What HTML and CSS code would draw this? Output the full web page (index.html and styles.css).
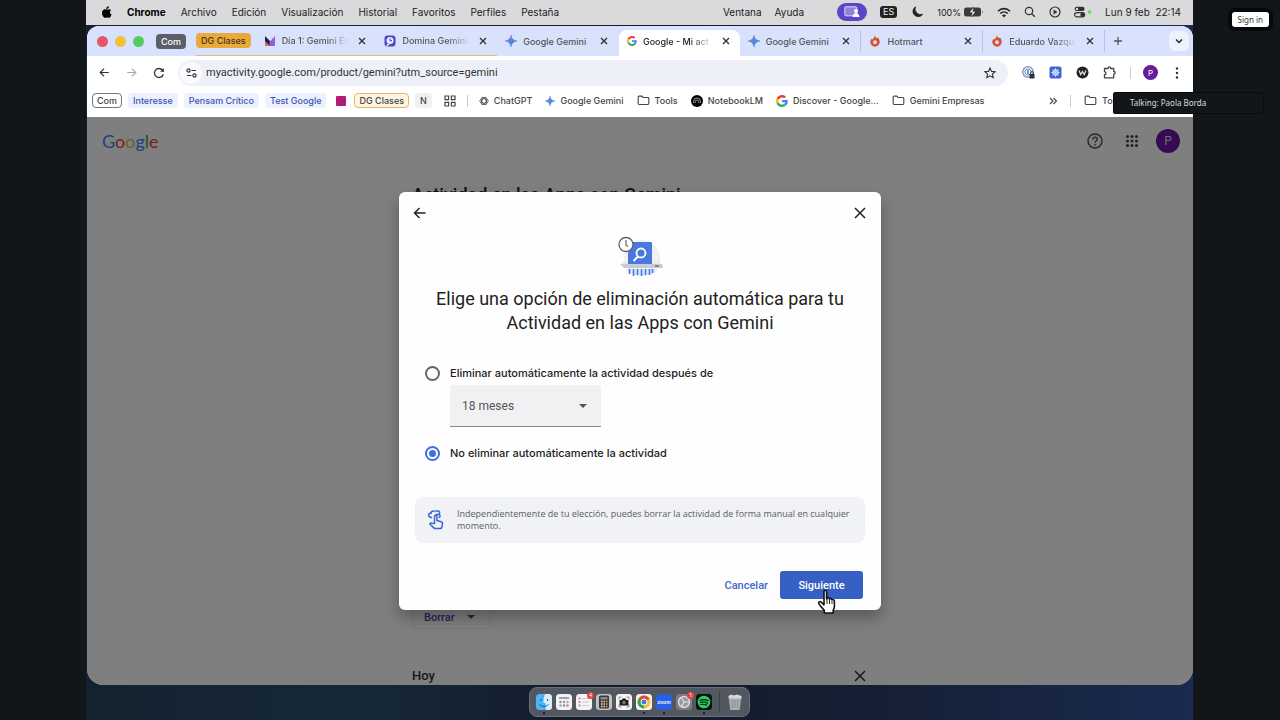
FILE: index.html
```html
<!DOCTYPE html>
<html lang="es">

<head>
  <meta charset="UTF-8">
  <meta name="viewport" content="width=device-width, initial-scale=1.0">
  <title>Google - Mi actividad</title>
  <link rel="stylesheet" href="styles.css">
</head>

<body>
  <!-- shared icons -->
  <svg class="sprite" aria-hidden="true">
    <defs>
      <linearGradient id="gem-fill" x1="0" y1="0" x2="1" y2="1">
        <stop offset="0.1" stop-color="#e0574a"/>
        <stop offset="0.4" stop-color="#5b86e8"/>
        <stop offset="0.65" stop-color="#4a86e8"/>
        <stop offset="1" stop-color="#3fae5f"/>
      </linearGradient>
      <symbol id="x" viewBox="0 0 10 10"><path d="M2 2l6 6M8 2l-6 6" stroke="currentColor" stroke-width="1.4" fill="none"/></symbol>
      <symbol id="x-big" viewBox="0 0 16 16"><path d="M3 3l10 10M13 3L3 13" stroke="currentColor" stroke-width="1.5" fill="none"/></symbol>
      <symbol id="gem" viewBox="0 0 24 24"><path d="M12 0c1 7 5 11 12 12-7 1-11 5-12 12-1-7-5-11-12-12 7-1 11-5 12-12z" fill="url(#gem-fill)" stroke="url(#gem-fill)" stroke-width="1"/></symbol>
      <symbol id="g" viewBox="0 0 48 48">
        <path fill="#EA4335" d="M24 9.5c3.54 0 6.71 1.22 9.21 3.6l6.85-6.85C35.9 2.38 30.47 0 24 0 14.62 0 6.51 5.38 2.56 13.22l7.98 6.19C12.43 13.72 17.74 9.5 24 9.5z"/>
        <path fill="#4285F4" d="M46.98 24.55c0-1.57-.15-3.09-.38-4.55H24v9.02h12.94c-.58 2.96-2.26 5.48-4.78 7.18l7.73 6c4.51-4.18 7.09-10.36 7.09-17.65z"/>
        <path fill="#FBBC05" d="M10.53 28.59c-.48-1.45-.76-2.99-.76-4.59s.27-3.14.76-4.59l-7.98-6.19C.92 16.46 0 20.12 0 24s.92 7.54 2.56 10.78l7.97-6.19z"/>
        <path fill="#34A853" d="M24 48c6.48 0 11.93-2.13 15.89-5.81l-7.73-6c-2.15 1.45-4.92 2.3-8.16 2.3-6.26 0-11.57-4.22-13.47-9.91l-7.98 6.19C6.51 42.62 14.62 48 24 48z"/>
      </symbol>
      <symbol id="flame" viewBox="0 0 12 14"><path d="M6 0c0 2 1.400 3 2 3.800C8.800 3.600 9 3 9 2.600 10.800 4.200 11.500 6.200 11.500 8.200A5.500 5.500 0 1 1 .5 8.200C.5 6.500 1.300 5.300 2.200 4.400 2.500 5 3 5.200 3.500 5 4 3.500 5.800 2.500 6 0zM6 6.200a2.300 2.300 0 1 0 0 4.600 2.300 2.300 0 0 0 0-4.600z" fill="#d9502f" fill-rule="evenodd"/></symbol>
      <symbol id="folder" viewBox="0 0 14 12"><path d="M1.200 2.200c0-.6.4-1 1-1h3l1.400 1.500h5.200c.6 0 1 .4 1 1v5.600c0 .6-.4 1-1 1H2.200c-.6 0-1-.4-1-1z" fill="none" stroke="currentColor" stroke-width="1.200"/></symbol>
      <symbol id="arrow" viewBox="0 0 14 14"><path d="M12.500 7h-11M6.500 2l-5 5 5 5" fill="none" stroke="currentColor" stroke-width="1.500"/></symbol>
    </defs>
  </svg>

  <div class="screen">
    <nav class="menubar">
      <svg class="apple" viewBox="0 0 24 28"><path d="M16.500 0c.2 2-.6 3.800-1.700 5-1.100 1.300-2.800 2.200-4.500 2.100-.2-1.900.7-3.800 1.700-5C13.100.9 15 .1 16.500 0zM22 9.500c-1.700 1-2.900 2.700-2.900 5 0 2.700 1.600 4.700 3.900 5.600-.5 1.500-1.300 3-2.200 4.400-1.300 1.900-2.500 3.500-4.500 3.500-1.900 0-2.500-1.100-4.700-1.100S8.700 28 7 28c-2 .1-3.500-1.900-4.700-3.700C-.2 20.500-1 14.800 1.300 11.200 2.700 8.900 5 7.500 7.300 7.500c2.100 0 3.400 1.200 5 1.200 1.700 0 2.700-1.200 5.100-1.200 1.800 0 3.500.8 4.600 2z"/></svg>
      <b>Chrome</b>
      <span>Archivo</span>
      <span>Edición</span>
      <span>Visualización</span>
      <span>Historial</span>
      <span>Favoritos</span>
      <span>Perfiles</span>
      <span>Pestaña</span>
      <div class="menu-right">
        <span>Ventana</span>
        <span class="ayuda">Ayuda</span>
        <span class="share-pill"><svg width="16" height="12" viewBox="0 0 16 12"><rect x=".8" y=".8" width="12" height="9" rx="1" fill="#8f83e0" stroke="#dcd8fa"/><circle cx="12" cy="5" r="2" fill="#fff"/><path d="M8.500 11c0-5 7-5 7 0z" fill="#fff"/></svg></span>
        <span class="lang">ES</span>
        <svg class="moon" width="14" height="12" viewBox="0 0 14 12"><path d="M5.500 .8A5.300 5.300 0 1 0 12.700 8.200 5.600 5.600 0 0 1 5.500 .8z" fill="#222" stroke="#222" stroke-width=".8"/></svg>
        <span class="battery">100%
          <svg width="20" height="10" viewBox="0 0 20 10"><rect y=".5" width="17" height="9" rx="2.500" fill="#3a3a3c"/><path d="M18 3.500c1.200.4 1.200 2.600 0 3z" fill="#777"/><path d="M9.500 0L5.500 5.500h2.700L7.500 10l4-5.500H8.800z" fill="#fff" stroke="#333" stroke-width=".5"/></svg>
        </span>
        <svg class="wifi" width="14" height="11" viewBox="0 0 14 11"><path d="M1 4.200c3.400-3.500 8.600-3.500 12 0M3.200 6.500c2.200-2.100 5.400-2.100 7.600 0" fill="none" stroke="#222" stroke-width="1.600"/><path d="M5 8.200c1.200-1 2.800-1 4 0l-2 2.300z" fill="#222"/></svg>
        <svg width="12" height="12" viewBox="0 0 12 12"><circle cx="5" cy="5" r="3.700" fill="none" stroke="#333" stroke-width="1.200"/><path d="M7.800 7.800l3 3" stroke="#333" stroke-width="1.300"/></svg>
        <svg width="12" height="12" viewBox="0 0 12 12"><circle cx="6" cy="6" r="5" fill="none" stroke="#333" stroke-width="1.200"/><path d="M4.500 3.600v4.800L8.500 6z" fill="#333"/></svg>
        <svg width="18" height="12" viewBox="0 0 18 12"><rect x=".6" y=".8" width="10" height="4.200" rx="2.100" fill="#333"/><circle cx="3" cy="2.900" r="1.200" fill="#ddd"/><rect x=".6" y="6.600" width="10" height="4.200" rx="2.100" fill="none" stroke="#333" stroke-width="1.200"/><circle cx="8.300" cy="8.700" r="2" fill="#333"/><circle cx="15.500" cy="6" r="1.800" fill="#6ad45c"/></svg>
        <span class="clock">Lun 9 feb&nbsp; 22:14</span>
      </div>
    </nav>

    <div class="window">
      <div class="tabstrip">
        <div class="lights"><i class="red"></i><i class="yellow"></i><i class="green"></i></div>
        <button class="group-chip dark">Com</button>
        <div class="group-head"><button class="group-chip orange">DG Clases</button></div>
        <div class="tab grouped">
          <svg class="fav" viewBox="0 0 12 12"><path d="M1 1l5 5v5H1z" fill="#1d2050"/><path d="M11 1L5.500 7v4H11z" fill="#8b62d8"/><path d="M1 6l5 5H1z" fill="#e8694a"/></svg>
          <span class="tab-name fade">Día 1: Gemini En</span><button class="tab-close" aria-label="Cerrar"><svg><use href="#x"/></svg></button>
        </div>
        <div class="tab grouped">
          <svg class="fav" viewBox="0 0 12 12"><rect x=".5" y=".5" width="11" height="11" rx="3" fill="#5143c9"/><circle cx="6" cy="5.500" r="3.500" fill="#dff0ff"/><path d="M6 3.500v2.200h2" stroke="#4336a8" fill="none"/><path d="M3 9l-.5 3L6 9z" fill="#dff0ff"/></svg>
          <span class="tab-name fade">Domina Gemini</span><button class="tab-close" aria-label="Cerrar"><svg><use href="#x"/></svg></button>
        </div>
        <div class="tab no-line">
          <svg class="fav"><use href="#gem"/></svg>
          <span class="tab-name">Google Gemini</span><button class="tab-close" aria-label="Cerrar"><svg><use href="#x"/></svg></button>
        </div>
        <div class="tab active">
          <svg class="fav small"><use href="#g"/></svg>
          <span class="tab-name fade">Google - Mi act</span><button class="tab-close" aria-label="Cerrar"><svg><use href="#x"/></svg></button>
        </div>
        <div class="tab">
          <svg class="fav"><use href="#gem"/></svg>
          <span class="tab-name">Google Gemini</span><button class="tab-close" aria-label="Cerrar"><svg><use href="#x"/></svg></button>
        </div>
        <div class="tab">
          <svg class="fav"><use href="#flame"/></svg>
          <span class="tab-name">Hotmart</span><button class="tab-close" aria-label="Cerrar"><svg><use href="#x"/></svg></button>
        </div>
        <div class="tab">
          <svg class="fav"><use href="#flame"/></svg>
          <span class="tab-name fade">Eduardo Vazqu</span><button class="tab-close" aria-label="Cerrar"><svg><use href="#x"/></svg></button>
        </div>
        <button class="new-tab" aria-label="Nueva pestaña"><svg width="10" height="10" viewBox="0 0 10 10"><path d="M5 1v8M1 5h8" stroke="currentColor" stroke-width="1.300"/></svg></button>
        <button class="tab-search" aria-label="Buscar pestañas"><svg width="8" height="8" viewBox="0 0 8 8"><path d="M1 2.500l3 3 3-3" stroke="currentColor" stroke-width="1.400" fill="none"/></svg></button>
      </div>

      <div class="toolbar">
        <button class="tool" aria-label="Atrás"><svg width="11" height="11"><use href="#arrow"/></svg></button>
        <button class="tool off" aria-label="Adelante"><svg class="flip" width="11" height="11"><use href="#arrow"/></svg></button>
        <button class="tool" aria-label="Recargar"><svg width="12" height="12" viewBox="0 0 12 12"><path d="M10.300 7.200A4.500 4.500 0 1 1 9.500 3.200L10.500 4.500" fill="none" stroke="currentColor" stroke-width="1.300"/><path d="M10.900 1v3.800H7.100z" fill="currentColor"/></svg></button>
        <div class="omnibox">
          <button class="tune" aria-label="Información del sitio"><svg width="11" height="10" viewBox="0 0 11 10"><g fill="none" stroke="currentColor" stroke-width="1.200"><circle cx="2.500" cy="2.500" r="1.600"/><path d="M5.500 2.500H10"/><circle cx="8.500" cy="7.500" r="1.600"/><path d="M1 7.500h4.500"/></g></svg></button>
          <input type="text" aria-label="Dirección" value="myactivity.google.com/product/gemini?utm_source=gemini">
          <button class="star" aria-label="Añadir a favoritos"><svg width="12" height="12" viewBox="0 0 12 12"><path d="M6 1l1.500 3.400 3.600.3-2.700 2.400.8 3.600L6 8.800l-3.200 1.900.8-3.600L.9 4.700l3.600-.3z" fill="none" stroke="currentColor" stroke-width="1.100"/></svg></button>
        </div>
        <div class="extensions">
          <svg viewBox="0 0 13 13"><circle cx="6" cy="6" r="5.300" fill="#e6edf7" stroke="#7793bb" stroke-width="1.200"/><circle cx="6" cy="6" r="3" fill="#fff" stroke="#7793bb"/><path d="M6 4v4" stroke="#3970c9" stroke-width="1.500"/><rect x="7.500" y="8" width="5" height="4.500" rx=".6" fill="#333"/><path d="M8.600 8V6.800c0-1.600 2.800-1.600 2.800 0V8" fill="none" stroke="#333"/></svg>
          <svg viewBox="0 0 13 13"><rect x=".5" y=".5" width="12" height="12" rx="2" fill="#3b62d8"/><circle cx="6.500" cy="6.500" r="2.600" fill="none" stroke="#dfe8ff" stroke-width="1.200"/><path d="M6.500 2v9M2 6.500h9M3.300 3.300l6.400 6.400M9.700 3.300l-6.400 6.400" stroke="#dfe8ff" stroke-width=".7"/></svg>
          <svg viewBox="0 0 13 13"><circle cx="6.500" cy="6.500" r="6" fill="#222"/><path d="M3 4.500l1.800 4 1.700-3 1.700 3 1.800-4" fill="none" stroke="#ddd" stroke-width="1.300"/></svg>
          <svg viewBox="0 0 13 13"><path d="M1.500 2.500H5c0-2.200 2.600-2.200 2.600 0h3.100v3c2 0 2 2.700 0 2.700v3.600H1.500V8.600c2-.2 2-2.700 0-2.900z" fill="none" stroke="#444" stroke-width="1.300" stroke-linejoin="round"/></svg>
        </div>
        <i class="divider"></i>
        <button class="profile">P</button>
        <button class="more" aria-label="Más"><svg width="4" height="12" viewBox="0 0 4 12"><g fill="currentColor"><circle cx="2" cy="1.500" r="1.200"/><circle cx="2" cy="6" r="1.200"/><circle cx="2" cy="10.500" r="1.200"/></g></svg></button>
      </div>

      <div class="bookmarks">
        <a href="#" class="chip outline">Com</a>
        <a href="#" class="chip blue">Interesse</a>
        <a href="#" class="chip blue">Pensam Crítico</a>
        <a href="#" class="chip blue">Test Google</a>
        <i class="pink-square"></i>
        <a href="#" class="chip gold">DG Clases</a>
        <a href="#" class="chip grey">N</a>
        <svg class="apps-icon" width="12" height="12" viewBox="0 0 12 12"><path d="M1 1h3.600v3.600H1zM7.400 1H11v3.600H7.400zM1 7.400h3.600V11H1zM7.400 7.400H11V11H7.400z" fill="none" stroke="#444" stroke-width="1.200"/></svg>
        <i class="divider"></i>
        <a href="#" class="bm"><svg class="fav small" viewBox="0 0 12 12"><g fill="none" stroke="#555" stroke-width="1"><ellipse cx="6" cy="6" rx="5" ry="2.600"/><ellipse cx="6" cy="6" rx="5" ry="2.600" transform="rotate(60 6 6)"/><ellipse cx="6" cy="6" rx="5" ry="2.600" transform="rotate(120 6 6)"/></g></svg>ChatGPT</a>
        <a href="#" class="bm"><svg class="fav small"><use href="#gem"/></svg>Google Gemini</a>
        <a href="#" class="bm"><svg class="folder"><use href="#folder"/></svg>Tools</a>
        <a href="#" class="bm"><svg class="fav" viewBox="0 0 12 12"><circle cx="6" cy="6" r="6" fill="#000"/><path d="M2.500 8V6.500a3.500 3.500 0 0 1 7 0V8M4.200 8V6.800a1.800 1.800 0 0 1 3.600 0V8" fill="none" stroke="#bbb" stroke-width=".8"/></svg>NotebookLM</a>
        <a href="#" class="bm"><svg class="fav"><use href="#g"/></svg>Discover - Google...</a>
        <a href="#" class="bm"><svg class="folder"><use href="#folder"/></svg>Gemini Empresas</a>
        <div class="bm-end">
          <svg width="8" height="8" viewBox="0 0 8 8"><path d="M1 1l3 3-3 3M4.500 1l3 3-3 3" fill="none" stroke="#444" stroke-width="1.100"/></svg>
          <i class="divider"></i>
          <a href="#" class="bm"><svg class="folder"><use href="#folder"/></svg>To</a>
        </div>
      </div>

      <div class="page">
        <header class="page-header">
          <a href="#" class="logo"><span class="b">G</span><span class="r">o</span><span class="y">o</span><span class="b">g</span><span class="gr">l</span><span class="r">e</span></a>
          <svg class="help" width="16" height="16" viewBox="0 0 16 16"><circle cx="8" cy="8" r="7" fill="none" stroke="#555" stroke-width="1.500"/><path d="M5.800 6.400c0-3 4.400-2.800 4.400-.1C10.200 8 8 8 8 9.800" fill="none" stroke="#555" stroke-width="1.400"/><circle cx="8" cy="11.800" r=".9" fill="#555"/></svg>
          <svg class="apps" width="14" height="14" viewBox="0 0 14 14"><g fill="#444"><circle cx="2.500" cy="2.500" r="1.500"/><circle cx="7" cy="2.500" r="1.500"/><circle cx="11.500" cy="2.500" r="1.500"/><circle cx="2.500" cy="7" r="1.500"/><circle cx="7" cy="7" r="1.500"/><circle cx="11.500" cy="7" r="1.500"/><circle cx="2.500" cy="11.500" r="1.500"/><circle cx="7" cy="11.500" r="1.500"/><circle cx="11.500" cy="11.500" r="1.500"/></g></svg>
          <button class="avatar">P</button>
        </header>
        <main class="activity">
          <h1>Actividad en las Apps con Gemini</h1>
          <button class="borrar">Borrar <svg width="8" height="4" viewBox="0 0 8 4"><path d="M0 0h8L4 4z" fill="#555"/></svg></button>
          <div class="day"><h2>Hoy</h2><svg width="16" height="16"><use href="#x-big"/></svg></div>
        </main>

        <div class="overlay">
          <form class="dialog" role="dialog" aria-labelledby="dialog-title">
            <div class="dialog-top">
              <button type="button" aria-label="Volver"><svg width="14" height="14"><use href="#arrow"/></svg></button>
              <button type="button" aria-label="Cerrar"><svg width="16" height="16"><use href="#x-big"/></svg></button>
            </div>
            <svg class="art" width="46" height="44" viewBox="-1 -1 46 44">
              <circle cx="24" cy="22" r="18" fill="#f0f1f3"/>
              <path d="M8 33h32c-5 9-27 9-32 0z" fill="#dfe8fc"/>
              <path d="M3 28h39v-9l-3 7H5z" fill="#e8eaed"/>
              <rect x="10" y="6" width="24" height="23" rx="1" fill="#4a78e0"/>
              <circle cx="23" cy="17" r="4.500" fill="none" stroke="#fff" stroke-width="1.800"/>
              <path d="M20 20.500l-4.500 4.500" stroke="#fff" stroke-width="2"/>
              <path d="M2 28h42l1 4H6z" fill="#c9cbd0"/>
              <path d="M37 29h4v2h-4z" fill="#9a8388"/>
              <path d="M11.500 33v5M15.500 33v7M19.500 33v6M23.500 33v7M27.500 33v6M31.500 33v6M34.500 33v4" stroke="#4a78e0" stroke-width="1.600"/>
              <circle cx="8" cy="8.500" r="7" fill="#fff" stroke="#5f6368" stroke-width="1.300"/>
              <path d="M8 4v5l2 1.500" fill="none" stroke="#5f6368" stroke-width="1.200"/>
            </svg>
            <h2 id="dialog-title">Elige una opción de eliminación automática para tu Actividad en las Apps con Gemini</h2>
            <div class="options">
              <div class="option">
                <input type="radio" name="auto" id="auto-on">
                <label for="auto-on">Eliminar automáticamente la actividad después de</label>
              </div>
              <div class="select-box">
                <select aria-label="Periodo">
                  <option>3 meses</option>
                  <option selected>18 meses</option>
                  <option>36 meses</option>
                </select>
              </div>
              <div class="option">
                <input type="radio" name="auto" id="auto-off" checked>
                <label for="auto-off">No eliminar automáticamente la actividad</label>
              </div>
            </div>
            <div class="notice">
              <svg width="18" height="20" viewBox="0 0 18 20"><g fill="none" stroke="#3c66d0" stroke-width="1.500" stroke-linejoin="round"><path d="M7.500 13.500V6.500a1.200 1.200 0 0 1 2.400 0v4l4.300 1.200c1 .3 1.500 1 1.300 2l-.6 3.300c-.2 1-.8 1.600-1.800 1.600H8.500c-.7 0-1.200-.2-1.700-.7L2.700 14c.8-1 1.500-1.100 2.400-.8z"/><path d="M5 7.500H4a2.300 2.300 0 0 1 0-4.600h1M4 2.900a1.800 1.800 0 0 1 3.300-1M8 1h3a1.700 1.700 0 0 1 0 3.400H8.500M11.500 4.400a1.600 1.600 0 0 1 0 3.200"/></g></svg>
              <p>Independientemente de tu elección, puedes borrar la actividad de forma manual en cualquier momento.</p>
            </div>
            <div class="actions">
              <button type="button" class="cancel">Cancelar</button>
              <button type="button" class="next">Siguiente</button>
            </div>
            <svg class="cursor" width="20" height="26" viewBox="0 0 20 26"><path d="M7 2.500C7 .8 9.600.8 9.600 2.500V10l.4-.9c.8-.8 2.300-.3 2.400 1 .8-1 2.400-.5 2.500.8 1-.8 2.500-.1 2.500 1.300v5.300c0 1.500-.5 2.500-1.200 3.600V24H7.300v-2.600C5.500 19.500 3.600 17.500 1.900 14.600c-.9-1.500.8-2.700 2.200-1.600L7 15.800z" fill="#fff" stroke="#111" stroke-width="1.600" stroke-linejoin="round"/><path d="M10 10v5M12.500 11v4M15 12v3" stroke="#111" stroke-width=".9"/></svg>
          </form>
        </div>
      </div>
    </div>

    <div class="dock-area">
      <div class="dock">
        <span class="app on"><svg viewBox="0 0 16 16"><rect width="16" height="16" rx="3.500" fill="#4fb4f5"/><path d="M9 0h3.500A3.500 3.500 0 0 1 16 3.500v9a3.500 3.500 0 0 1-3.500 3.500H10C9.500 13 9.500 11 9.500 9H7.500c0-4 .7-7 1.500-9z" fill="#dcecf8"/><path d="M3.500 10.500c2.500 2.500 6.500 2.500 9 0M5 5v2M11.500 5v2" fill="none" stroke="#234a80"/></svg></span>
        <span class="app"><svg viewBox="0 0 16 16"><rect width="16" height="16" rx="3.500" fill="#f2f2f4"/><path d="M3 4h10" stroke="#888" stroke-width="1.500"/><g fill="#5d9ad8"><circle cx="4.500" cy="8" r="1.200"/><circle cx="8" cy="11.500" r="1.200"/></g><g fill="#d8776b"><circle cx="8" cy="8" r="1.200"/><circle cx="11.500" cy="11.500" r="1.200"/></g><g fill="#aaa"><circle cx="11.500" cy="8" r="1.200"/><circle cx="4.500" cy="11.500" r="1.200"/></g></svg></span>
        <span class="app"><svg viewBox="0 0 16 16"><rect width="16" height="16" rx="3.500" fill="#f4f2f4"/><path d="M6 4.500h7M6 8h7M6 11.500h7" stroke="#ccc"/><g fill="#c96ba0"><circle cx="3.500" cy="4.500" r="1"/><circle cx="3.500" cy="8" r="1"/><circle cx="3.500" cy="11.500" r="1"/></g></svg><i class="badge">4</i></span>
        <span class="app"><svg viewBox="0 0 16 16"><rect width="16" height="16" rx="3.500" fill="#c3c1c0"/><rect x="3" y="1.500" width="10" height="13" rx="1.500" fill="#3b3838"/><rect x="4.500" y="3" width="7" height="2.500" fill="#888"/><path d="M5 7.500h1.500M7.500 7.500H9M5 10h1.500M7.500 10H9M5 12.500h1.500M7.500 12.500H9" stroke="#ddd" stroke-width="1.300"/><path d="M10 7.500h1.500M10 10h1.500M10 12.500h1.500" stroke="#f19a37" stroke-width="1.300"/></svg></span>
        <span class="app"><svg viewBox="0 0 16 16"><rect width="16" height="16" rx="3.500" fill="#f5f5f5"/><path d="M3 5.500V3h2.500M10.500 3H13v2.500M13 10.500V13h-2.500M5.500 13H3v-2.500" fill="none" stroke="#777" stroke-width=".8"/><path d="M3.500 6h2l1-1.500h3l1 1.500h2v5.500h-9z" fill="#222"/><circle cx="8" cy="8.500" r="1.700" fill="#777"/></svg></span>
        <span class="app on"><svg viewBox="0 0 16 16"><rect width="16" height="16" rx="3.500" fill="#f5f5f5"/><circle cx="8" cy="8" r="6.500" fill="#f0c531"/><path d="M8 8L2.400 4.800A6.500 6.500 0 0 0 8 14.500z" fill="#35a453"/><path d="M2.400 4.800A6.500 6.500 0 0 1 13.600 4.800L8 8z" fill="#dd4b3b"/><circle cx="8" cy="8" r="3" fill="#3f7de0" stroke="#fff"/></svg></span>
        <span class="app on zoom">zoom</span>
        <span class="app"><svg viewBox="0 0 16 16"><rect width="16" height="16" rx="3.500" fill="#7b7d80"/><circle cx="8" cy="8" r="5.500" fill="#95989c" stroke="#d8d8da" stroke-width="1.500"/><path d="M8 8L5.500 3.500M8 8h5M8 8l-2.500 4.500" stroke="#e0e0e2" stroke-width="1.200"/></svg><i class="badge">1</i></span>
        <span class="app on"><svg viewBox="0 0 16 16"><rect width="16" height="16" rx="3.500" fill="#0c1410"/><circle cx="8" cy="8" r="6.300" fill="#2bd160"/><path d="M4 6.200c3-.9 6-.6 8.300.6M4.400 8.400c2.600-.7 5-.4 7 .7M4.800 10.500c2.200-.5 4-.3 5.700.6" fill="none" stroke="#0c1410" stroke-width="1.200" stroke-linecap="round"/></svg></span>
        <i class="dock-line"></i>
        <span class="app"><svg viewBox="0 0 16 16"><path d="M1.500 2h13l-1.800 14H3.300z" fill="#a9acae"/><path d="M1.500 2l2.500-1.500 3 1 3-1 4.500 1.500-.3 2.500H2z" fill="#d5d7d8"/><path d="M5 6l.6 8M8 6v8M11 6l-.6 8" stroke="#8c9092"/></svg></span>
      </div>
    </div>
  </div>

  <button class="sign-in">Sign in</button>
  <div class="talking">Talking: Paola Borda</div>
</body>

</html>
```
FILE: styles.css
```css
* {
  box-sizing: border-box;
}

body {
  margin: 0;
  height: 100vh;
  padding: 0 87px 0 86px;
  background: #131619;
  font-family: Inter, "Liberation Sans", sans-serif;
  font-size: 10px;
  color: #333;
  overflow: hidden;
}

button {
  border: 0;
  padding: 0;
  background: none;
  font: inherit;
  color: inherit;
  cursor: pointer;
}

a {
  color: inherit;
  text-decoration: none;
}

svg {
  display: block;
  flex: none;
}

.sprite {
  position: absolute;
  width: 0;
  height: 0;
}

.screen {
  height: 100%;
  display: flex;
  flex-direction: column;
  background: linear-gradient(90deg, #14222f, #162838 25%, #131c2b 45%, #151f33 70%, #1a2a50);
}

/* menu bar */
.menubar {
  display: flex;
  align-items: center;
  gap: 15px;
  height: 25px;
  padding: 0 12px 1px 16px;
  background: #dad9db;
  color: #222;
  font-size: 10px;
  font-weight: 400;
  white-space: nowrap;
}

.menubar b {
  font-weight: 700;
  color: #000;
}

.apple {
  width: 10px;
  height: 12px;
}

.menu-right {
  display: flex;
  align-items: center;
  gap: 13px;
  margin-left: auto;
}

.ayuda {
  margin-right: 20px;
}

.share-pill {
  display: flex;
  align-items: center;
  justify-content: center;
  width: 30px;
  height: 18px;
  border-radius: 9px;
  background: #5b46c8;
}

.lang {
  padding: 0 3px;
  border-radius: 3px;
  background: #222;
  color: #eee;
  font-size: 9px;
  line-height: 12px;
}

.battery {
  display: flex;
  align-items: center;
  gap: 3px;
  font-size: 9px;
}

/* browser window */
.window {
  flex: 1;
  min-height: 0;
  display: flex;
  flex-direction: column;
  margin: 1px 0 0 1px;
  border-radius: 12px 12px 16px 16px;
  background: #fff;
  overflow: hidden;
}

.tabstrip {
  display: flex;
  align-items: center;
  height: 30px;
  padding: 0 4px 0 10px;
  background: #d9e2fc;
  color: #555;
  font-size: 9px;
  font-weight: 500;
}

.lights {
  display: flex;
  gap: 7px;
  margin-right: 12px;
}

.lights i {
  width: 11px;
  height: 11px;
  border-radius: 50%;
}

.red {
  background: #e4566a;
}

.yellow {
  background: #f3c03c;
}

.green {
  background: #55cb5f;
}

.group-chip {
  height: 15px;
  padding: 0 5px;
  border-radius: 4px;
  white-space: nowrap;
}

.group-chip.dark {
  margin-right: 10px;
  background: #5b5f68;
  color: #fff;
}

.group-chip.orange {
  background: #eaa93b;
  color: #4b3411;
}

.group-head,
.grouped {
  height: 30px;
  border-bottom: 1px solid #e5bc77;
}

.group-head {
  display: flex;
  align-items: center;
  padding-right: 5px;
}

.tab {
  flex: 1 1 0;
  min-width: 0;
  display: flex;
  align-items: center;
  height: 22px;
  padding: 0 9px 0 8px;
  border-right: 1px solid #b9c2dd;
}

.tab.grouped {
  height: 30px;
  border-right: 0;
}

.tab.no-line {
  border-right-color: transparent;
}

.tab.active {
  align-self: flex-end;
  height: 26px;
  padding-bottom: 4px;
  border-right: 0;
  border-radius: 8px 8px 0 0;
  background: #fff;
  color: #222;
}

.fav {
  width: 12px;
  height: 12px;
}

.fav.small {
  width: 10px;
  height: 10px;
}

.tab-name {
  flex: 1;
  min-width: 0;
  margin-left: 6px;
  white-space: nowrap;
}

.fade {
  mask-image: linear-gradient(90deg, #000 60%, transparent 90%);
}

.tab-close svg {
  width: 10px;
  height: 10px;
  color: #333;
}

.new-tab {
  margin: 0 46px 0 8px;
}

.tab-search {
  display: flex;
  align-items: center;
  justify-content: center;
  width: 20px;
  height: 20px;
  border-radius: 6px;
  background: #edf2fe;
  color: #222;
}

.toolbar {
  display: flex;
  align-items: center;
  height: 33px;
  padding: 0 14px 0 4px;
}

.tool {
  display: flex;
  justify-content: center;
  width: 27px;
}

.tool.off {
  color: #aaa;
}

.flip {
  transform: scaleX(-1);
}

.omnibox {
  flex: 1;
  display: flex;
  align-items: center;
  height: 26px;
  margin: 0 14px 0 6px;
  padding: 0 12px 0 2px;
  border-radius: 13px;
  background: #eef0f9;
}

.tune {
  display: flex;
  align-items: center;
  justify-content: center;
  width: 22px;
  height: 22px;
  border-radius: 50%;
  background: #fafbfe;
}

.omnibox input {
  flex: 1;
  border: 0;
  padding: 0 4px;
  background: none;
  font-family: Roboto, sans-serif;
  font-size: 11px;
  color: #333;
  outline: none;
}

.extensions {
  display: flex;
  gap: 14px;
}

.extensions svg {
  width: 13px;
  height: 13px;
}

.divider {
  width: 1px;
  height: 12px;
  background: #ccc;
}

.toolbar .divider {
  margin: 0 12px 0 14px;
}

.profile {
  width: 15px;
  height: 15px;
  border-radius: 50%;
  background: #651d99;
  color: #fff;
  font-size: 8px;
}

.more {
  margin-left: 17px;
}

.bookmarks {
  display: flex;
  align-items: center;
  gap: 6px;
  height: 28px;
  padding: 0 0 5px 5px;
  color: #444;
  font-size: 9px;
  font-weight: 500;
  white-space: nowrap;
  overflow: hidden;
}

.chip {
  padding: 0 4px;
  border: 1px solid transparent;
  border-radius: 4px;
  line-height: 13px;
}

.chip.outline {
  border-color: #777;
}

.chip.blue {
  background: #edf1fe;
  color: #3a56b4;
}

.chip.gold {
  border-color: #e3b761;
  background: #fdf5e2;
}

.chip.grey {
  background: #f1f1f3;
}

.pink-square {
  width: 10px;
  height: 10px;
  margin: 0 2px 0 4px;
  border-radius: 1px;
  background: #b31b78;
}

.apps-icon {
  margin: 0 5px 0 6px;
}

.bookmarks > .divider {
  margin-right: 5px;
}

.bm {
  display: flex;
  align-items: center;
  gap: 5px;
  margin-right: 7px;
}

.folder {
  width: 13px;
  height: 11px;
}

.bm-end {
  display: flex;
  align-items: center;
  gap: 13px;
  width: 144px;
  margin-left: auto;
}

/* activity page behind the dialog */
.page {
  flex: 1;
  min-height: 0;
  position: relative;
  font-family: Roboto, "Liberation Sans", sans-serif;
}

.page-header {
  display: flex;
  align-items: center;
  height: 48px;
  padding: 0 13px 0 15px;
}

.logo {
  margin-right: auto;
  font-family: Lato, sans-serif;
  font-size: 18px;
}

.logo .b {
  color: #4285f4;
}

.logo .r {
  color: #ea4335;
}

.logo .y {
  color: #e0c040;
}

.logo .gr {
  color: #34a853;
}

.apps {
  margin: 0 17px 0 22px;
}

.avatar {
  width: 24px;
  height: 24px;
  border-radius: 50%;
  background: #7014a8;
  color: #ddd;
  font-size: 12px;
}

.activity {
  width: 456px;
  margin: 0 auto;
  padding-top: 18px;
}

.activity h1 {
  margin: 0;
  font-size: 18px;
  line-height: 24px;
  font-weight: 500;
  color: #222;
}

.borrar {
  display: flex;
  align-items: center;
  justify-content: space-between;
  width: 78px;
  height: 24px;
  margin-top: 398px;
  padding: 0 14px 0 11px;
  border: 1px solid #eee;
  border-radius: 4px;
  color: #4a48c8;
  font-size: 11px;
  font-weight: 500;
}

.day {
  display: flex;
  align-items: center;
  justify-content: space-between;
  margin-top: 37px;
}

.day h2 {
  margin: 0;
  font-size: 13px;
  line-height: 20px;
  font-weight: 500;
}

/* dialog */
.overlay {
  position: absolute;
  inset: 0;
  display: flex;
  align-items: center;
  justify-content: center;
  background: rgba(0, 0, 0, 0.5);
}

.dialog {
  position: relative;
  display: flex;
  flex-direction: column;
  width: 482px;
  padding: 13px 16px 11px;
  border-radius: 6px;
  background: #fefefe;
  box-shadow: 0 8px 16px rgba(0, 0, 0, 0.3);
  color: #222;
}

.dialog-top {
  display: flex;
  align-items: center;
  justify-content: space-between;
  height: 16px;
  margin: 0 -3px 0 -2px;
}

.art {
  align-self: center;
  margin-top: 14px;
}

.dialog h2 {
  margin: 8px 16px 0;
  font-size: 18px;
  line-height: 24px;
  font-weight: 400;
  text-align: center;
}

.options {
  padding: 27px 10px 0;
}

.option {
  display: flex;
  align-items: center;
  gap: 10px;
  height: 22px;
  font-family: Inter, sans-serif;
  font-size: 11px;
  font-weight: 500;
}

.option input {
  appearance: none;
  display: grid;
  place-items: center;
  width: 15px;
  height: 15px;
  margin: 0;
  border: 2px solid #666;
  border-radius: 50%;
}

.option input:checked {
  border-color: #3f6fdc;
}

.option input:checked::before {
  content: "";
  width: 7px;
  height: 7px;
  border-radius: 50%;
  background: #3f6fdc;
}

.select-box {
  position: relative;
  width: 151px;
  margin: 1px 0 15px 25px;
}

.select-box::after {
  content: "";
  position: absolute;
  top: 19px;
  right: 14px;
  border: 4px solid transparent;
  border-top-color: #555;
  border-bottom: 0;
}

.select-box select {
  appearance: none;
  display: block;
  width: 100%;
  height: 42px;
  padding: 0 12px;
  border: 0;
  border-bottom: 1px solid #888;
  border-radius: 3px 3px 0 0;
  background: #f1f1f4;
  font-family: inherit;
  font-size: 12px;
  color: #555;
}

.notice {
  display: flex;
  align-items: center;
  gap: 12px;
  height: 46px;
  margin-top: 33px;
  padding: 0 12px;
  border-radius: 8px;
  background: #f0f2f6;
}

.notice p {
  margin: 0;
  font-family: "Open Sans", sans-serif;
  font-size: 9px;
  line-height: 12px;
  color: #5a5d63;
}

.actions {
  display: flex;
  justify-content: flex-end;
  gap: 12px;
  margin: 28px 2px 0 0;
  font-size: 11px;
  font-weight: 500;
}

.cancel {
  color: #4268c8;
}

.next {
  width: 83px;
  height: 28px;
  border-radius: 3px;
  background: #3660c4;
  color: #fff;
}

.cursor {
  position: absolute;
  right: 44px;
  bottom: -5px;
}

/* dock */
.dock-area {
  height: 35px;
  display: flex;
  justify-content: center;
}

.dock {
  display: flex;
  align-items: center;
  gap: 4px;
  height: 30px;
  margin-top: 2px;
  padding: 0 6px;
  border: 1px solid #6b7078;
  border-radius: 8px;
  background: #535860;
}

.app {
  position: relative;
  width: 16px;
  height: 16px;
}

.app svg {
  width: 16px;
  height: 16px;
}

.app.on::after {
  content: "";
  position: absolute;
  left: 7px;
  bottom: -4px;
  width: 2px;
  height: 2px;
  border-radius: 50%;
  background: #111;
}

.zoom {
  border-radius: 4px;
  background: #2b5fe3;
  color: #fff;
  font-size: 5px;
  font-weight: 600;
  line-height: 16px;
  text-align: center;
}

.badge {
  position: absolute;
  top: -2px;
  right: -2px;
  width: 7px;
  height: 7px;
  border-radius: 50%;
  background: #e2463f;
  color: #fff;
  font-size: 5px;
  font-style: normal;
  line-height: 7px;
  text-align: center;
}

.dock-line {
  width: 1px;
  height: 22px;
  margin: 0 3px;
  background: #3b4048;
}

/* call overlays */
.sign-in {
  position: absolute;
  top: 12px;
  right: 11px;
  padding: 0 6px;
  border-radius: 3px;
  background: #fff;
  box-shadow: 0 0 0 4px #07080a;
  color: #333;
  font-family: "Noto Sans", sans-serif;
  font-size: 8px;
  line-height: 15px;
}

.talking {
  position: absolute;
  top: 92px;
  right: 16px;
  width: 151px;
  height: 22px;
  padding-left: 16px;
  border: 1px solid #0a0b0d;
  border-radius: 2px;
  background: #131619;
  color: #ddd;
  font-family: "Noto Sans", sans-serif;
  font-size: 8px;
  line-height: 20px;
}
```
